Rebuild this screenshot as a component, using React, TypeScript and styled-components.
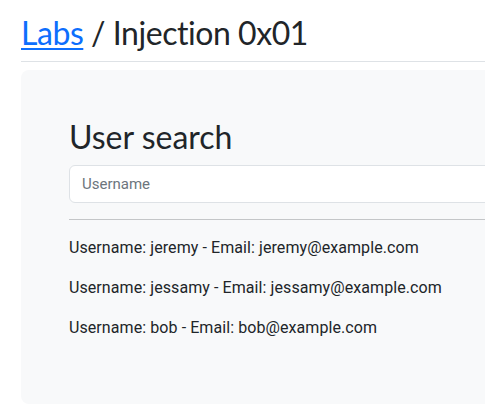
import React from "react";
import styled, { createGlobalStyle } from "styled-components";

const Global = createGlobalStyle`
  html, body { margin: 0; padding: 0; overflow: hidden; background: #fff; }
  body {
    font-family: Roboto, "Liberation Sans", sans-serif;
    font-size: 16px;
    line-height: 1.5;
    color: #212529;
  }
  * { box-sizing: border-box; }
`;

const Page = styled.div`
  width: 900px;
  padding: 14px 0 0 21px;
`;

const Title = styled.h2`
  margin: 0 0 8px;
  padding-bottom: 9px;
  border-bottom: 1px solid #dee2e6;
  font-family: Lato, "Liberation Sans", sans-serif;
  font-weight: 400;
  font-size: 32px;
  line-height: 1.2;
  letter-spacing: -0.45px;
`;

const Crumb = styled.a`
  color: #0d6efd;
  text-decoration: underline;
  text-decoration-thickness: 2px;
  text-underline-offset: 3px;
`;

const Panel = styled.section`
  background: #f8f9fa;
  border-radius: 8px;
  padding: 48px;
`;

const Heading = styled.h2`
  margin: 0 0 8px;
  font-family: Lato, "Liberation Sans", sans-serif;
  font-weight: 400;
  font-size: 32px;
  line-height: 1.2;
`;

const Input = styled.input`
  display: block;
  width: 100%;
  height: 38px;
  padding: 6px 12px;
  font: inherit;
  font-size: 15px;
  color: #212529;
  background: #fff;
  border: 1px solid #dee2e6;
  border-radius: 6px;
  outline: none;
  &::placeholder { color: #6c757d; }
`;

const Rule = styled.hr`
  margin: 16px 0;
  border: 0;
  border-top: 1px solid #c4c6c8;
`;

const Result = styled.p`
  margin: 0 0 16px;
  letter-spacing: 0.08px;
`;

const users = [
  { name: "jeremy", email: "jeremy@example.com" },
  { name: "jessamy", email: "jessamy@example.com" },
  { name: "bob", email: "bob@example.com" },
];

export default function App() {
  return (
    <>
      <Global />
      <Page>
        <Title>
          <Crumb href="#">Labs</Crumb> / Injection 0x01
        </Title>
        <Panel>
          <Heading>User search</Heading>
          <Input placeholder="Username" />
          <Rule />
          {users.map((u) => (
            <Result key={u.name}>
              Username: {u.name} - Email: {u.email}
            </Result>
          ))}
        </Panel>
      </Page>
    </>
  );
}
